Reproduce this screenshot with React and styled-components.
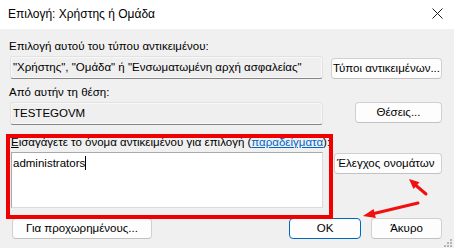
import React from "react";
import styled, { createGlobalStyle, css } from "styled-components";

const GlobalStyle = createGlobalStyle`
  html, body {
    margin: 0;
    padding: 0;
    background: #f0f0f0;
  }
  body {
    font-family: "Liberation Sans", Arial, sans-serif;
    font-size: 11.5px;
    color: #000;
  }
`;

const App = () => {
  return (
    <>
      <GlobalStyle />
      <Window>
        <TitleBar>
          <Title>Επιλογή: Χρήστης ή Ομάδα</Title>
          <Close>
            <svg width="11" height="11" viewBox="0 0 11 11">
              <path d="M0.5 0.5 L10.5 10.5 M10.5 0.5 L0.5 10.5" stroke="#1b1b1b" strokeWidth="1" fill="none" />
            </svg>
          </Close>
        </TitleBar>

        <Body>
          <Section $top={11}>
            <Label>Επιλογή αυτού του τύπου αντικειμένου:</Label>
            <Row $align="flex-end">
              <Field>"Χρήστης", "Ομάδα" ή "Ενσωματωμένη αρχή ασφαλείας"</Field>
              <Button $width={111}>Τύποι αντικειμένων...</Button>
            </Row>
          </Section>

          <Section $top={7}>
            <Label>Από αυτήν τη θέση:</Label>
            <Row $align="flex-start">
              <Field>TESTEGOVM</Field>
              <Button $width={87}>Θέσεις...</Button>
            </Row>
          </Section>

          <Section $top={11}>
            <Label $indent={2}>
              <u>Ε</u>ισαγάγετε το όνομα αντικειμένου για επιλογή (<Link>παραδείγματα</Link>):
            </Label>
            <Row $align="flex-start">
              <NameBox>
                administrators<Caret />
              </NameBox>
              <Button $width={108} $offset={1} $tight>
                Έλεγχος ονομάτων
              </Button>
            </Row>
          </Section>

          <Footer>
            <Button $width={140}>Για προχωρημένους...</Button>
            <FooterRight>
              <Button $width={72} $primary>
                OK
              </Button>
              <Button $width={71}>Άκυρο</Button>
            </FooterRight>
          </Footer>
        </Body>

        <Highlight />

        <Arrows width="454" height="248" viewBox="0 0 454 248">
          <line x1="426" y1="194" x2="416" y2="185.5" stroke="#f01010" strokeWidth="3" strokeLinecap="round" />
          <polygon points="409,179 419.5,182.2 413.5,189" fill="#f01010" />
          <line x1="418" y1="203" x2="374" y2="213.5" stroke="#f01010" strokeWidth="3" strokeLinecap="round" />
          <polygon points="363,216 375.8,218 373.6,209" fill="#f01010" />
        </Arrows>

        <Grip width="8" height="8" viewBox="0 0 8 8">
          <rect x="6" y="0" width="2" height="2" fill="#b5b5b5" />
          <rect x="3" y="3" width="2" height="2" fill="#b5b5b5" />
          <rect x="6" y="3" width="2" height="2" fill="#b5b5b5" />
          <rect x="0" y="6" width="2" height="2" fill="#b5b5b5" />
          <rect x="3" y="6" width="2" height="2" fill="#b5b5b5" />
          <rect x="6" y="6" width="2" height="2" fill="#b5b5b5" />
        </Grip>
      </Window>
    </>
  );
};

export default App;

const Window = styled.div`
  position: relative;
  width: 454px;
  height: 248px;
  background: #f0f0f0;
  overflow: hidden;
`;

const TitleBar = styled.div`
  height: 29px;
  background: #ffffff;
  display: flex;
  align-items: center;
  justify-content: space-between;
  padding: 0 11px 1px 8px;
  box-sizing: border-box;
`;

const Title = styled.div`
  font-size: 12px;
  color: #000;
`;

const Close = styled.div`
  display: flex;
  width: 12px;
  height: 12px;
  align-items: center;
  justify-content: center;
  margin-top: -2px;
`;

const Body = styled.div`
  padding: 0 12px 0 10px;
`;

const Section = styled.div`
  margin-top: ${({ $top }) => $top}px;
`;

const Label = styled.div`
  line-height: 13px;
  margin-left: ${({ $indent }) => ($indent ? $indent - 1 : -1)}px;
  white-space: nowrap;

  u {
    text-decoration: underline;
  }
`;

const Link = styled.span`
  color: #0066cc;
  text-decoration: underline;
`;

const Row = styled.div`
  display: flex;
  justify-content: space-between;
  align-items: ${({ $align }) => $align};
  margin-top: 3px;
`;

const Field = styled.div`
  width: 313px;
  height: 23px;
  box-sizing: border-box;
  background: #efefef;
  border: 1px solid #e2e2e2;
  border-bottom-color: #868686;
  border-radius: 3px;
  box-shadow: inset 0 0 0 1px #f8f8f8;
  padding: 4px 0 0 2px;
  line-height: 13px;
  white-space: nowrap;
  overflow: hidden;
`;

const NameBox = styled.div`
  width: 312px;
  height: 56px;
  margin-left: 1px;
  box-sizing: border-box;
  background: #ffffff;
  border: 1px solid #a9a9a9;
  border-right-color: #dadada;
  border-bottom-color: #dadada;
  padding: 3px 0 0 1px;
  line-height: 13px;
`;

const Caret = styled.span`
  display: inline-block;
  width: 1px;
  height: 14px;
  background: #000;
  vertical-align: -3px;
`;

const Button = styled.div`
  width: ${({ $width }) => $width}px;
  height: 21px;
  margin-top: ${({ $offset }) => $offset || 0}px;
  box-sizing: border-box;
  display: flex;
  align-items: center;
  justify-content: center;
  background: #fdfdfd;
  border: 1px solid #d0d0d0;
  border-bottom-color: #c2c2c2;
  border-radius: 4px;
  line-height: 13px;
  white-space: nowrap;
  overflow: visible;

  ${({ $tight }) =>
    $tight &&
    css`
      justify-content: flex-start;
      padding-left: 2px;
    `}

  ${({ $primary }) =>
    $primary &&
    css`
      border-color: #0067c0;
      background: #fdfdfd;
    `}
`;

const Footer = styled.div`
  display: flex;
  justify-content: space-between;
  align-items: center;
  margin-top: 10px;
  padding-left: 2px;
`;

const FooterRight = styled.div`
  display: flex;
  gap: 10px;
`;

const Highlight = styled.div`
  position: absolute;
  left: 6px;
  top: 134px;
  width: 327px;
  height: 85px;
  box-sizing: border-box;
  border: 4px solid #f00000;
  pointer-events: none;
`;

const Arrows = styled.svg`
  position: absolute;
  left: 0;
  top: 0;
  pointer-events: none;
`;

const Grip = styled.svg`
  position: absolute;
  right: 2px;
  bottom: 1px;
`;
